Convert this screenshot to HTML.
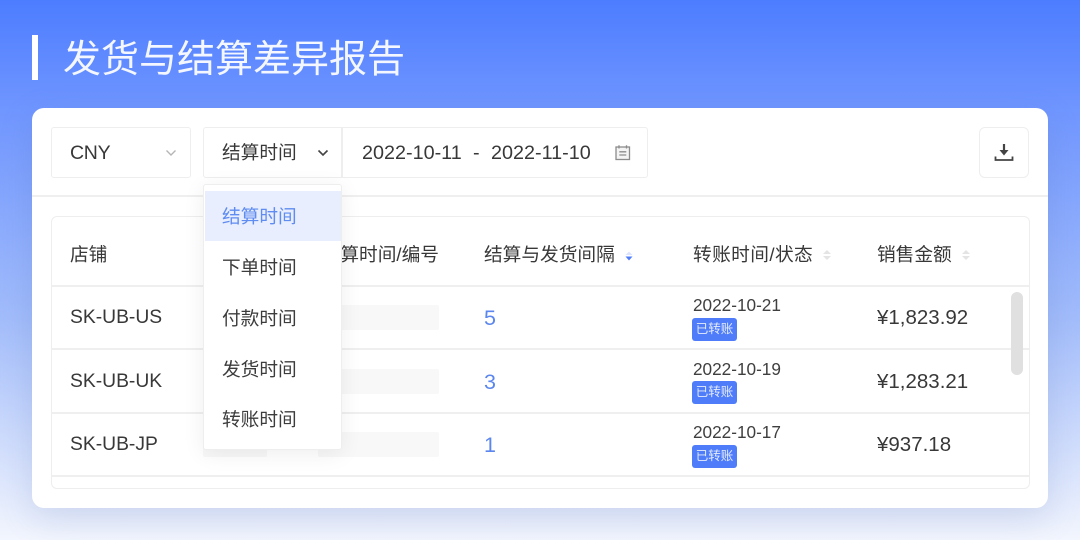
<!DOCTYPE html>
<html lang="zh"><head><meta charset="utf-8"><title>发货与结算差异报告</title>
<style>
*{box-sizing:border-box;margin:0;padding:0}
html,body{width:1080px;height:540px;overflow:hidden}
body{background:#f3f6fe}
#w{position:absolute;left:0;top:0;width:1080px;height:540px;filter:blur(.35px);background:linear-gradient(180deg,#4d7dff 0,#7096ff 110px,#a3bdfb 320px,#eff3fd 530px,#f3f6fe 540px);font-family:"Liberation Sans","Noto Sans CJK SC",sans-serif;color:#3a3a3a}
.a{position:absolute}
.t{position:absolute;white-space:nowrap;line-height:24px;font-size:18.7px;color:#383838}
.b{position:absolute;border:1.5px solid #eeeeee;border-radius:3px;background:#fff}
.l{position:absolute;height:2px;background:#efefef}
.sk{position:absolute;background:#f8f8f8;border-radius:2px}
.tag{position:absolute;left:692px;width:45px;height:23px;background:#4f7dfa;border-radius:3px;color:#e4ebff;font-size:12.5px;line-height:22px;text-align:center}
.d{position:absolute;left:693px;font-size:17.2px;line-height:22px;color:#3f3f3f;white-space:nowrap}
.m{position:absolute;left:222px;font-size:18.7px;line-height:24px;color:#3c3c3c;white-space:nowrap}
</style></head><body><div id="w">
<div class="a" style="left:32px;top:35px;width:6px;height:45px;background:#fff"></div>
<div class="t" style="left:63px;top:36px;font-size:38px;line-height:48px;color:#f4f7ff">发货与结算差异报告</div>

<div class="a" style="left:32px;top:108px;width:1016px;height:400px;background:#fff;border-radius:12px;box-shadow:0 10px 34px rgba(80,110,180,.2)"></div>

<div class="b" style="left:51px;top:127px;width:140px;height:51px"></div>
<div class="t" style="left:70px;top:141px;font-size:19.500px;letter-spacing:-.3px">CNY</div>
<svg class="a" style="left:164px;top:148px" width="14" height="10" viewBox="0 0 14 10"><path d="M2.500 2.500 7 7l4.500-4.500" fill="none" stroke="#b5b5b5" stroke-width="1.400"/></svg>

<div class="b" style="left:203px;top:127px;width:445px;height:51px"></div>
<div class="a" style="left:341px;top:128px;width:1.500px;height:49px;background:#eeeeee"></div>
<div class="t" style="left:222px;top:141px">结算时间</div>
<svg class="a" style="left:316px;top:148px" width="14" height="10" viewBox="0 0 14 10"><path d="M2.500 2.500 7 7l4.500-4.500" fill="none" stroke="#444" stroke-width="1.600"/></svg>
<div class="t" style="left:362px;top:141px;font-size:19.800px">2022-10-11</div>
<div class="t" style="left:473px;top:141px;font-size:19.800px">-</div>
<div class="t" style="left:491px;top:141px;font-size:19.800px">2022-11-10</div>
<svg class="a" style="left:613px;top:143px" width="20" height="20" viewBox="0 0 20 20" fill="none" stroke="#8c8c8c" stroke-width="1.300"><rect x="3" y="4" width="13.500" height="12.500" fill="#f4f4f4"/><path d="M6 2.200v3.300M13.500 2.200v3.300M6.300 8.800h7M6.300 12h7"/></svg>

<div class="b" style="left:979px;top:127px;width:50px;height:51px;border-radius:6px"></div>
<svg class="a" style="left:992px;top:141px" width="24" height="24" viewBox="0 0 24 24" fill="none" stroke="#444"><path d="M12 3v8" stroke-width="2.200"/><path d="M7.500 9h9L12 14.500z" fill="#444" stroke="none"/><path d="M3.500 15.500v3.500h17v-3.500" stroke-width="1.800"/></svg>

<div class="l" style="left:32px;top:195px;width:1016px"></div>

<div class="b" style="left:51px;top:216px;width:979px;height:273px;border-radius:6px"></div>
<div class="l" style="left:52px;top:285px;width:977px"></div>
<div class="l" style="left:52px;top:348px;width:977px"></div>
<div class="l" style="left:52px;top:412px;width:977px"></div>
<div class="l" style="left:52px;top:475px;width:977px"></div>

<div class="t" style="left:70px;top:243px">店铺</div>
<div class="t" style="left:264px;top:243px;width:175px;text-align:right">结算时间/编号</div>
<div class="t" style="left:484px;top:243px">结算与发货间隔</div>
<svg class="a" style="left:624px;top:250px" width="10" height="12" viewBox="0 0 10 12"><path d="M5 1.500 8.500 5h-7z" fill="#dbe4fb"/><path d="M5 10.500 8.500 6.500h-7z" fill="#4f7dfa"/></svg>
<div class="t" style="left:693px;top:243px;letter-spacing:.4px">转账时间/状态</div>
<svg class="a" style="left:822px;top:249px" width="10" height="12" viewBox="0 0 10 12"><path d="M5 1 9 5H1zM5 11 9 7H1z" fill="#e4e4e4"/></svg>
<div class="t" style="left:877px;top:243px">销售金额</div>
<svg class="a" style="left:961px;top:249px" width="10" height="12" viewBox="0 0 10 12"><path d="M5 1 9 5H1zM5 11 9 7H1z" fill="#e4e4e4"/></svg>

<div class="t" style="left:70px;top:306px;font-size:19.300px">SK-UB-US</div>
<div class="t" style="left:70px;top:370px;font-size:19.300px">SK-UB-UK</div>
<div class="t" style="left:70px;top:433px;font-size:19.300px">SK-UB-JP</div>

<div class="sk" style="left:318px;top:305px;width:121px;height:25px"></div>
<div class="sk" style="left:318px;top:369px;width:121px;height:25px"></div>
<div class="sk" style="left:318px;top:432px;width:121px;height:25px"></div>
<div class="sk" style="left:203px;top:432px;width:64px;height:25px"></div>

<div class="t" style="left:484px;top:306px;font-size:21.500px;color:#5b86ee">5</div>
<div class="t" style="left:484px;top:370px;font-size:21.500px;color:#5b86ee">3</div>
<div class="t" style="left:484px;top:433px;font-size:21.500px;color:#5b86ee">1</div>

<div class="d" style="top:294px">2022-10-21</div><div class="tag" style="top:318px">已转账</div>
<div class="d" style="top:358px">2022-10-19</div><div class="tag" style="top:381px">已转账</div>
<div class="d" style="top:421px">2022-10-17</div><div class="tag" style="top:445px">已转账</div>

<div class="t" style="left:877px;top:306px;font-size:20.500px">¥1,823.92</div>
<div class="t" style="left:877px;top:370px;font-size:20.500px">¥1,283.21</div>
<div class="t" style="left:877px;top:433px;font-size:20.500px">¥937.18</div>

<div class="a" style="left:1011px;top:292px;width:12px;height:83px;background:#e0e0e0;border-radius:6px"></div>

<div class="a" style="left:203px;top:184px;width:139px;height:266px;background:#fff;border:1.500px solid #eeeeee;border-radius:3px;box-shadow:0 4px 22px rgba(0,0,0,.07)"></div>
<div class="a" style="left:205px;top:191px;width:136px;height:50px;background:#e8eefd"></div>
<div class="m" style="top:205px;color:#5f8cf0">结算时间</div>
<div class="m" style="top:256px">下单时间</div>
<div class="m" style="top:307px">付款时间</div>
<div class="m" style="top:358px">发货时间</div>
<div class="m" style="top:408px">转账时间</div>
</div></body></html>
